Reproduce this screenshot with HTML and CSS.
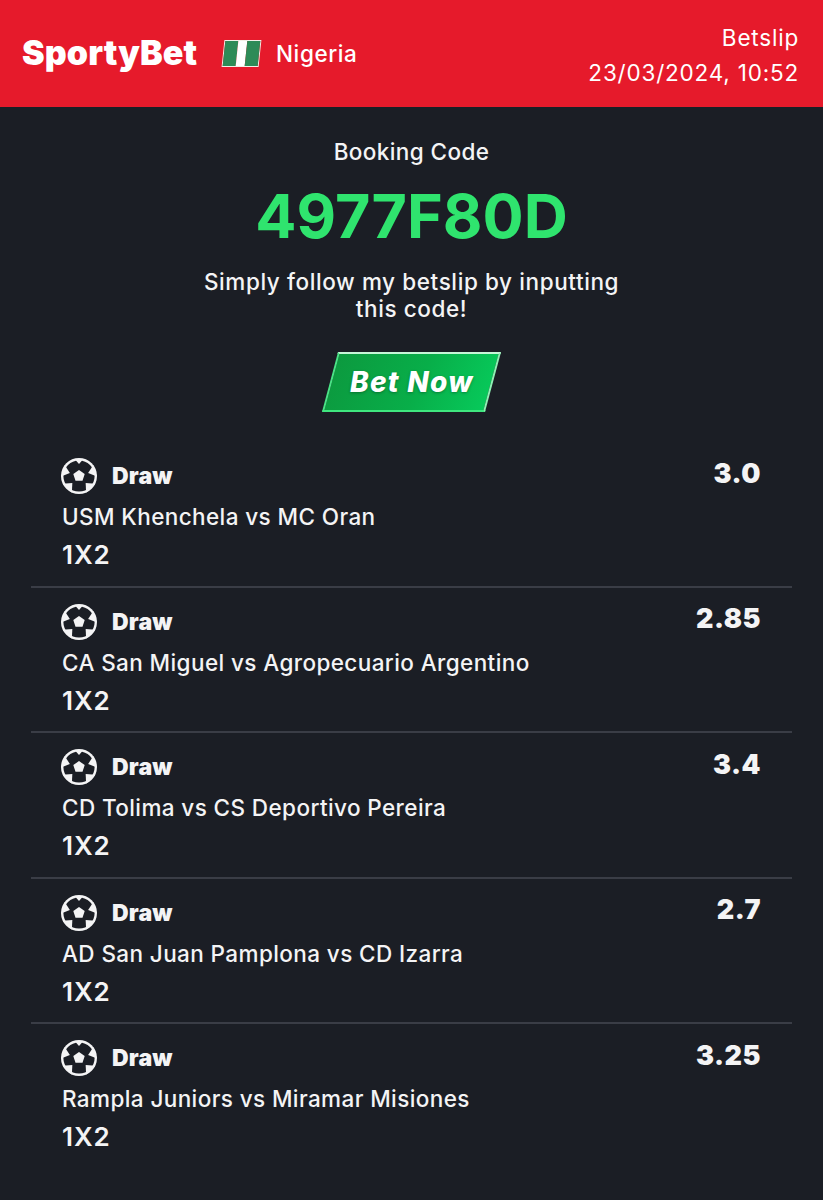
FILE: index.html
```html
<!DOCTYPE html>
<html lang="en">
<head>
    <meta charset="UTF-8">
    <meta name="viewport" content="width=device-width, initial-scale=1.0">
    <title>SportyBet Betslip</title>
    <link rel="stylesheet" href="styles.css">
</head>
<body>
    <svg class="sprite" width="0" height="0">
        <symbol id="ball" viewBox="0 0 36 36">
            <circle cx="18" cy="18" r="18" fill="#f4f4f5"/>
            <circle cx="18" cy="18" r="15.6" fill="#1b1e25"/>
            <g fill="#f4f4f5">
                <path d="M18 6 22.4 1 13.6 1Z"/>
                <path d="M18 8.4 24 1 12 1Z" transform="rotate(72 18 18)"/>
                <path d="M18 8.4 24.5 1 11.5 1Z" transform="rotate(136 18 18)"/>
                <path d="M18 8.4 24.5 1 11.5 1Z" transform="rotate(224 18 18)"/>
                <path d="M18 8.4 24 1 12 1Z" transform="rotate(288 18 18)"/>
                <path d="M18 12 23.7 16.1 21.5 22.8 14.5 22.8 12.3 16.1Z"/>
            </g>
        </symbol>
    </svg>

    <div class="header">
        <div class="brand">
            <span class="logo">SportyBet</span>
            <span class="flag"><i></i><i></i><i></i></span>
            <span class="country">Nigeria</span>
        </div>
        <div class="slip-info">
            <div>Betslip</div>
            <div>23/03/2024, 10:52</div>
        </div>
    </div>

    <div class="booking">
        <p class="booking-label">Booking Code</p>
        <p class="booking-code">4977F80D</p>
        <p class="booking-note">Simply follow my betslip by inputting<br>this code!</p>
        <div class="bet-now"><span>Bet Now</span></div>
    </div>

    <div class="bets">
        <div class="bet">
            <div class="bet-top">
                <svg class="ball"><use href="#ball"/></svg>
                <span class="pick">Draw</span>
                <span class="odds">3.0</span>
            </div>
            <div class="match">USM Khenchela vs MC Oran</div>
            <div class="market">1X2</div>
        </div>
        <div class="bet">
            <div class="bet-top">
                <svg class="ball"><use href="#ball"/></svg>
                <span class="pick">Draw</span>
                <span class="odds">2.85</span>
            </div>
            <div class="match">CA San Miguel vs Agropecuario Argentino</div>
            <div class="market">1X2</div>
        </div>
        <div class="bet">
            <div class="bet-top">
                <svg class="ball"><use href="#ball"/></svg>
                <span class="pick">Draw</span>
                <span class="odds">3.4</span>
            </div>
            <div class="match">CD Tolima vs CS Deportivo Pereira</div>
            <div class="market">1X2</div>
        </div>
        <div class="bet">
            <div class="bet-top">
                <svg class="ball"><use href="#ball"/></svg>
                <span class="pick">Draw</span>
                <span class="odds">2.7</span>
            </div>
            <div class="match">AD San Juan Pamplona vs CD Izarra</div>
            <div class="market">1X2</div>
        </div>
        <div class="bet">
            <div class="bet-top">
                <svg class="ball"><use href="#ball"/></svg>
                <span class="pick">Draw</span>
                <span class="odds">3.25</span>
            </div>
            <div class="match">Rampla Juniors vs Miramar Misiones</div>
            <div class="market">1X2</div>
        </div>
    </div>
</body>
</html>
```

FILE: styles.css
```css
* {
    margin: 0;
    padding: 0;
    box-sizing: border-box;
}

body {
    font-family: Inter, "Liberation Sans", sans-serif;
    color: #f4f4f5;
    background-color: #1b1e25;
    height: 1200px;
    overflow: hidden;
}

.sprite {
    display: block;
    height: 0;
}

.header {
    height: 107px;
    background: #e61a2b;
    color: #fff;
    display: flex;
    justify-content: space-between;
    align-items: center;
    padding: 0 24px 0 22px;
}

.brand {
    display: flex;
    align-items: center;
}

.logo {
    font-size: 34px;
    font-weight: 900;
    letter-spacing: 0.1px;
    width: 201px;
    margin-top: -2px;
}

.flag {
    width: 37px;
    height: 27px;
    border: 1px solid #f3f0e8;
    display: flex;
    transform: skewX(-6deg);
    margin-right: 16px;
}

.flag i {
    flex: 1;
    background: #2e8b57;
}

.flag i:nth-child(2) {
    flex: 0.7;
    background: #fff;
}

.country {
    font-size: 22.5px;
    font-weight: 500;
    letter-spacing: 0.6px;
}

.slip-info {
    text-align: right;
    font-size: 22.5px;
    line-height: 35px;
    letter-spacing: 0.8px;
    margin-top: 3px;
}

.booking {
    text-align: center;
    padding-top: 30px;
}

.booking-label {
    font-size: 22.5px;
    line-height: 30px;
    font-weight: 500;
    letter-spacing: 0.4px;
}

.booking-code {
    font-size: 61px;
    line-height: 72px;
    font-weight: 700;
    color: #2fe46e;
    margin-top: 13px;
}

.booking-note {
    font-size: 22.5px;
    line-height: 27px;
    font-weight: 500;
    letter-spacing: 0.6px;
    margin-top: 16px;
}

.bet-now {
    width: 163px;
    height: 60px;
    margin: 30px auto 0;
    transform: skewX(-15deg);
    background: linear-gradient(100deg, #0c9a3f 0%, #08ae49 55%, #07c95a 100%);
    border: 2px solid;
    border-color: #c6f7d8 #8ef2b3 #3fe77f #49e586;
    display: flex;
    align-items: center;
    justify-content: center;
}

.bet-now span {
    font-size: 28px;
    font-weight: 800;
    font-style: italic;
    letter-spacing: 1.3px;
    color: #fff;
    transform: skewX(15deg);
    text-shadow: 0 1px 3px rgba(0, 0, 0, 0.3);
}

.bets {
    margin: 30px 31px 0;
}

.bet {
    height: 145.6px;
    padding: 15px 31px 0 30px;
    border-bottom: 2px solid #3a3d46;
}

.bet:last-child {
    border-bottom: none;
}

.bet-top {
    display: flex;
    align-items: center;
    height: 38px;
}

.ball {
    width: 36px;
    height: 36px;
    margin-right: 15px;
}

.pick {
    font-size: 23px;
    font-weight: 900;
    letter-spacing: 0.2px;
}

.odds {
    margin-left: auto;
    margin-top: -6px;
    font-size: 27px;
    font-weight: 900;
    letter-spacing: 0.5px;
}

.match {
    font-size: 22.5px;
    line-height: 30px;
    font-weight: 500;
    letter-spacing: 0.4px;
    margin: 7px 0 0 1px;
}

.market {
    font-size: 26px;
    line-height: 30px;
    font-weight: 600;
    letter-spacing: 0.9px;
    margin: 8px 0 0 1px;
}
```
